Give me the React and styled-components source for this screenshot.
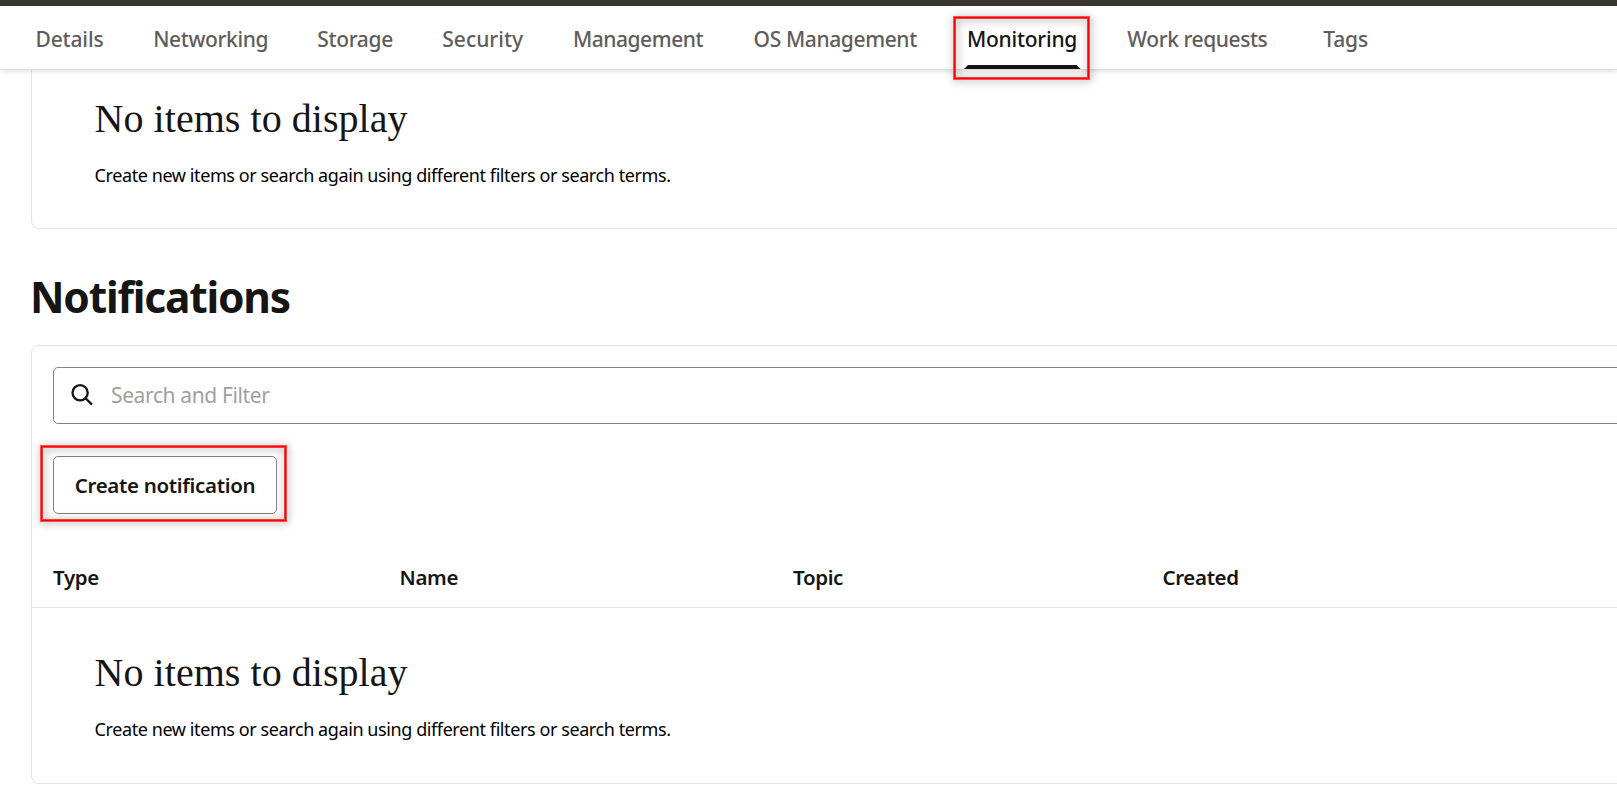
import React from 'react';
import styled, { createGlobalStyle } from 'styled-components';

const GlobalStyle = createGlobalStyle`
  *, *::before, *::after { box-sizing: border-box; }
  body {
    margin: 0;
    background: #fff;
    color: #161513;
    font-family: "Noto Sans", sans-serif;
    overflow: hidden;
  }
`;

const Page = styled.div`
  height: 787px;
  overflow: hidden;
  background: #fff;
`;

const TopBar = styled.div`
  height: 6px;
  background: #3a3631;
`;

const Nav = styled.nav`
  position: relative;
  z-index: 1;
  display: grid;
  grid-template-columns: 117.7px 164.1px 125px 130.6px 180.7px 213.4px 160.4px 196px 1fr;
  align-items: stretch;
  height: 64px;
  padding: 3px 0 0 35.5px;
  background: #fff;
  border-bottom: 1px solid #dedede;
  box-shadow: 0 1px 5px rgba(0, 0, 0, 0.14);
`;

const Tab = styled.a`
  position: relative;
  justify-self: start;
  display: flex;
  align-items: center;
  font-size: 21px;
  font-weight: 500;
  line-height: 28px;
  letter-spacing: ${(p) => p.$tracking}px;
  white-space: nowrap;
  color: ${(p) => (p.$active ? '#161513' : '#5f5d5b')};
`;

const Underline = styled.span`
  position: absolute;
  left: -3px;
  right: -3.5px;
  bottom: 0;
  height: 4px;
  background: #161513;
  clip-path: polygon(4px 0, calc(100% - 4px) 0, 100% 100%, 0 100%);
`;

const Highlight = styled.span`
  position: absolute;
  inset: ${(p) => p.$inset};
  border: 1px solid #ff0000;
  box-shadow:
    0 0 0 1px rgba(255, 0, 0, 0.65),
    inset 0 0 0 1px rgba(255, 0, 0, 0.75);
  filter: drop-shadow(1px 1px 4px rgba(0, 0, 0, 0.5));
  pointer-events: none;
`;

const Content = styled.main`
  padding-left: 31px;
`;

const Card = styled.section`
  width: 1640px;
  margin-top: ${(p) => p.$offset || 0}px;
  border: 1px solid #e3e3e3;
  border-radius: 8px;
`;

const SectionTitle = styled.h2`
  margin: 40px 0 20px -1px;
  font-size: 42.5px;
  font-weight: 700;
  line-height: 56px;
  letter-spacing: -1.2px;
`;

const Toolbar = styled.div`
  display: flex;
  flex-direction: column;
  align-items: flex-start;
  gap: 32px;
  padding: 21px 21px 0;
`;

const SearchField = styled.div`
  display: flex;
  align-items: center;
  align-self: stretch;
  gap: 15px;
  height: 57px;
  padding-left: 15px;
  border: 1px solid #85837f;
  border-radius: 5px;
`;

const SearchIcon = styled.svg`
  width: 27px;
  height: 27px;
  fill: none;
  stroke: #161513;
  stroke-width: 2.3;
`;

const Placeholder = styled.span`
  padding-bottom: 1px;
  font-size: 21px;
  line-height: 28px;
  letter-spacing: -0.38px;
  color: #a09f9e;
`;

const ButtonWrap = styled.div`
  position: relative;
`;

const Button = styled.button`
  display: block;
  width: 224px;
  height: 58px;
  padding: 0;
  border: 1px solid #85837f;
  border-radius: 5px;
  background: #fff;
  color: #161513;
  font-family: inherit;
  font-size: 20.5px;
  font-weight: 600;
  line-height: 28px;
  letter-spacing: -0.32px;
  white-space: nowrap;
`;

const HeaderRow = styled.div`
  display: grid;
  grid-template-columns: 346.5px 393.5px 369.5px 1fr;
  padding: 49px 0 16px 21px;
  border-bottom: 1px solid #e3e3e3;
`;

const HeaderCell = styled.div`
  font-size: 20.5px;
  font-weight: 600;
  line-height: 28px;
  letter-spacing: -0.35px;
`;

const Empty = styled.div`
  padding: 40px 0 ${(p) => p.$bottom}px 62.6px;
`;

const EmptyTitle = styled.h3`
  margin: 0 0 20px;
  font-family: "Liberation Serif", serif;
  font-size: 40px;
  font-weight: 400;
  line-height: 49px;
  letter-spacing: 0.04px;
`;

const EmptyText = styled.p`
  margin: 0;
  font-size: 18px;
  line-height: 24px;
  letter-spacing: -0.41px;
  color: #000;
`;

const TABS = [
  { label: 'Details', tracking: -0.15 },
  { label: 'Networking', tracking: -0.36 },
  { label: 'Storage', tracking: -0.34 },
  { label: 'Security', tracking: 0 },
  { label: 'Management', tracking: -0.45 },
  { label: 'OS Management', tracking: -0.38 },
  { label: 'Monitoring', tracking: -0.24, active: true },
  { label: 'Work requests', tracking: -0.42 },
  { label: 'Tags', tracking: -0.2 },
];

const COLUMNS = ['Type', 'Name', 'Topic', 'Created'];

function EmptyState({ bottom }) {
  return (
    <Empty $bottom={bottom}>
      <EmptyTitle>No items to display</EmptyTitle>
      <EmptyText>
        Create new items or search again using different filters or search terms.
      </EmptyText>
    </Empty>
  );
}

export default function App() {
  return (
    <Page>
      <GlobalStyle />
      <TopBar />
      <Nav>
        {TABS.map((tab) => (
          <Tab key={tab.label} $active={tab.active} $tracking={tab.tracking}>
            {tab.label}
            {tab.active && <Underline />}
            {tab.active && <Highlight $inset="8px -12px -10px -13px" />}
          </Tab>
        ))}
      </Nav>
      <Content>
        <Card $offset={-17}>
          <EmptyState bottom={41} />
        </Card>
        <SectionTitle>Notifications</SectionTitle>
        <Card>
          <Toolbar>
            <SearchField>
              <SearchIcon viewBox="0 0 27 27">
                <circle cx="11.1" cy="10.7" r="7.6" />
                <path d="M16.6 16.2 L23 22.6" />
              </SearchIcon>
              <Placeholder>Search and Filter</Placeholder>
            </SearchField>
            <ButtonWrap>
              <Button>Create notification</Button>
              <Highlight $inset="-10px -9px -7px -12px" />
            </ButtonWrap>
          </Toolbar>
          <HeaderRow>
            {COLUMNS.map((name) => (
              <HeaderCell key={name}>{name}</HeaderCell>
            ))}
          </HeaderRow>
          <EmptyState bottom={42} />
        </Card>
      </Content>
    </Page>
  );
}
